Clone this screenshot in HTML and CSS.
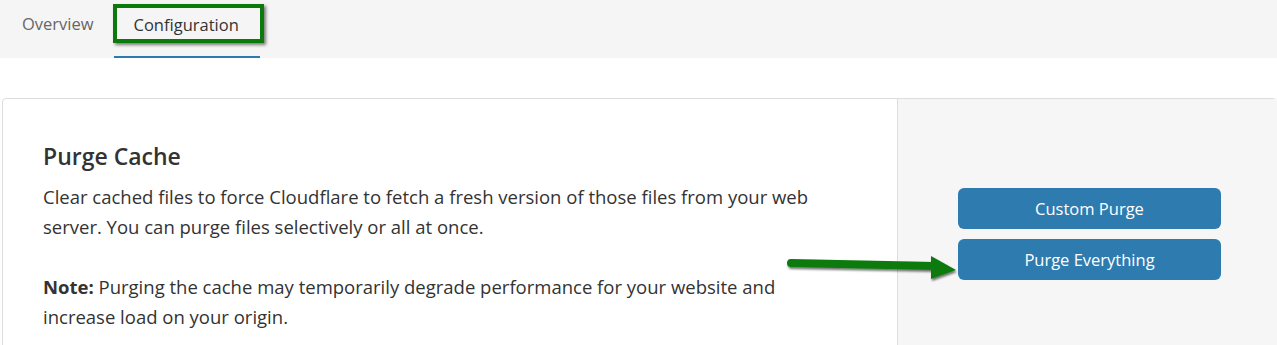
FILE: index.html
```html
<!DOCTYPE html>
<html lang="en">
<head>
    <meta charset="UTF-8">
    <meta name="viewport" content="width=device-width, initial-scale=1.0">
    <title>Caching - Configuration</title>
    <link rel="stylesheet" href="styles.css">
</head>
<body>
    <nav class="tabs">
        <a class="tab">Overview</a>
        <a class="tab active">Configuration<span class="mark-box"></span></a>
    </nav>

    <main class="content">
        <section class="card">
            <div class="card-body">
                <h2>Purge Cache</h2>
                <p>Clear cached files to force Cloudflare to fetch a fresh version of those files from your web server. You can purge files selectively or all at once.</p>
                <p><strong>Note:</strong> Purging the cache may temporarily degrade performance for your website and increase load on your origin.</p>
            </div>
            <div class="card-side">
                <button class="btn">Custom Purge</button>
                <button class="btn">Purge Everything</button>
            </div>
            <svg class="mark-arrow" width="180" height="30" viewBox="0 0 180 30">
                <defs>
                    <filter id="shade" x="-10%" y="-50%" width="120%" height="200%">
                        <feDropShadow dx="1" dy="2" stdDeviation="1.2" flood-color="#000" flood-opacity="0.55"/>
                    </filter>
                </defs>
                <g filter="url(#shade)">
                    <path d="M8 8 L152 11" stroke="#0b7a0b" stroke-width="8" stroke-linecap="round"/>
                    <path d="M148 1 L173 15 L148 24 Z" fill="#0b7a0b"/>
                </g>
            </svg>
        </section>
    </main>
</body>
</html>
```

FILE: styles.css
```css
body {
    margin: 0;
    font-family: "Open Sans", "Noto Sans", sans-serif;
    color: #333;
    background: #fff;
    overflow: hidden;
}
.tabs {
    display: flex;
    height: 58px;
    background: #f5f5f5;
    padding-left: 10px;
    box-sizing: border-box;
}
.tab {
    position: relative;
    padding: 12px 12px 0;
    font-size: 16.5px;
    color: #666;
    box-sizing: border-box;
    height: 58px;
}
.tab.active {
    color: #333;
    margin-left: 8px;
    padding: 13px 20px 0;
    width: 146px;
    border-bottom: 2px solid #2c7bb0;
}
.mark-box {
    position: absolute;
    left: -1px;
    top: 4px;
    width: 143px;
    height: 31px;
    border: 4px solid #0b7a0b;
    box-shadow: 2px 2px 3px rgba(0,0,0,0.5);
}
.content {
    padding: 40px 0 0 2px;
}
.card {
    position: relative;
    display: grid;
    grid-template-columns: 894px 400px;
    border: 1px solid #ddd;
    border-radius: 4px;
    height: 260px;
}
.card-body {
    padding: 42px 40px 0;
}
.card-body h2 {
    margin: 0 0 11px;
    font-size: 23px;
    font-weight: 600;
    line-height: 30px;
}
.card-body p {
    max-width: 795px;
    margin: 0 0 30px;
    font-size: 18.5px;
    line-height: 30px;
}
.card-side {
    background: #f6f6f6;
    border-left: 1px solid #ddd;
    display: flex;
    flex-direction: column;
    gap: 10px;
    padding: 89px 0 0 60px;
}
.btn {
    width: 263px;
    height: 41px;
    background: #2e7bb0;
    color: #fff;
    border: none;
    border-radius: 6px;
    font-family: inherit;
    font-size: 16.5px;
}
.mark-arrow {
    position: absolute;
    left: 780px;
    top: 156px;
}
```
